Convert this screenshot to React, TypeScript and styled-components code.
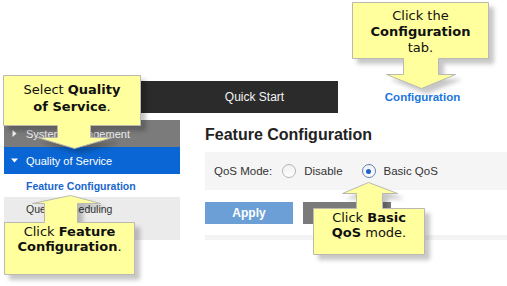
import styled, { createGlobalStyle } from "styled-components";

type Arrow = {
  dir: "up" | "down";
  sL: number;
  sR: number;
  hy: number;
  hL: number;
  hR: number;
  tipX: number;
  tipY: number;
};

type CalloutSpec = {
  left: number;
  top: number;
  w: number;
  h: number;
  padTop: number;
  lineHeight: number;
  arrow: Arrow;
  content: React.ReactNode;
};

const callouts: CalloutSpec[] = [
  {
    left: 3,
    top: 75,
    w: 138,
    h: 51,
    padTop: 6,
    lineHeight: 17,
    arrow: { dir: "down", sL: 54, sR: 87, hy: 62, hL: 34, hR: 109, tipX: 71, tipY: 73 },
    content: (
      <>
        Select <b>Quality</b>
        <br />
        <b>of Service</b>.
      </>
    ),
  },
  {
    left: 352,
    top: 2,
    w: 137,
    h: 57,
    padTop: 6,
    lineHeight: 16,
    arrow: { dir: "down", sL: 51, sR: 86, hy: 72, hL: 34, hR: 103, tipX: 69, tipY: 86 },
    content: (
      <>
        Click the
        <br />
        <b>Configuration</b>
        <br />
        tab.
      </>
    ),
  },
  {
    left: 4,
    top: 222,
    w: 131,
    h: 53,
    padTop: 2,
    lineHeight: 15,
    arrow: { dir: "up", sL: 40, sR: 73, hy: -19, hL: 28, hR: 96, tipX: 66, tipY: -27 },
    content: (
      <>
        Click <b>Feature</b>
        <br />
        <b>Configuration</b>.
      </>
    ),
  },
  {
    left: 313,
    top: 208,
    w: 112,
    h: 47,
    padTop: 2,
    lineHeight: 15,
    arrow: { dir: "up", sL: 43, sR: 69, hy: -15, hL: 29, hR: 84, tipX: 55, tipY: -26 },
    content: (
      <>
        Click <b>Basic</b>
        <br />
        <b>QoS</b> mode.
      </>
    ),
  },
];

function outline(w: number, h: number, a: Arrow) {
  const pts: [number, number][] =
    a.dir === "down"
      ? [
          [0, 0],
          [w, 0],
          [w, h],
          [a.sR, h],
          [a.sR, a.hy],
          [a.hR, a.hy],
          [a.tipX, a.tipY],
          [a.hL, a.hy],
          [a.sL, a.hy],
          [a.sL, h],
          [0, h],
        ]
      : [
          [0, 0],
          [a.sL, 0],
          [a.sL, a.hy],
          [a.hL, a.hy],
          [a.tipX, a.tipY],
          [a.hR, a.hy],
          [a.sR, a.hy],
          [a.sR, 0],
          [w, 0],
          [w, h],
          [0, h],
        ];
  return "M" + pts.map(([x, y]) => `${x + 0.5},${y + 0.5}`).join(" L") + " Z";
}

function Callout({ spec }: { spec: CalloutSpec }) {
  const { left, top, w, h, arrow } = spec;
  return (
    <CalloutWrap $left={left} $top={top} $w={w} $h={h}>
      <CalloutShape width={w + 1} height={h + 1}>
        <path d={outline(w - 1, h - 1, arrow)} fill="#ffff9d" stroke="#b9b9b0" strokeWidth={1} />
      </CalloutShape>
      <CalloutText $padTop={spec.padTop} $lh={spec.lineHeight}>
        {spec.content}
      </CalloutText>
    </CalloutWrap>
  );
}

function Radio({ checked }: { checked?: boolean }) {
  return (
    <RadioCircle $checked={checked}>{checked && <RadioDot />}</RadioCircle>
  );
}

function Tri({ down }: { down?: boolean }) {
  return (
    <svg width="7" height="7" viewBox="0 0 7 7">
      {down ? (
        <polygon points="0,1.5 7,1.5 3.5,5.5" fill="#fff" />
      ) : (
        <polygon points="1.5,0 5.5,3.5 1.5,7" fill="#f2f2f2" />
      )}
    </svg>
  );
}

export default function App() {
  return (
    <>
      <GlobalStyle />
      <Page>
        <Header>
          <DarkTabs>
            <Tab />
            <Tab>Quick Start</Tab>
          </DarkTabs>
          <ConfigTab>Configuration</ConfigTab>
        </Header>
        <Body>
          <Sidebar>
            <NavGroup $variant="closed">
              <Tri />
              System Management
            </NavGroup>
            <NavGroup $variant="open">
              <Tri down />
              Quality of Service
            </NavGroup>
            <NavItem $active>Feature Configuration</NavItem>
            <NavItem>Queue Scheduling</NavItem>
          </Sidebar>
          <Main>
            <Heading>Feature Configuration</Heading>
            <Panel>
              <FieldLabel>QoS Mode:</FieldLabel>
              <Option>
                <Radio />
                Disable
              </Option>
              <Option>
                <Radio checked />
                Basic QoS
              </Option>
            </Panel>
            <Buttons>
              <Button $variant="apply">Apply</Button>
              <Button $variant="cancel" />
            </Buttons>
            <Divider />
          </Main>
        </Body>
        {callouts.map((c, i) => (
          <Callout key={i} spec={c} />
        ))}
      </Page>
    </>
  );
}

const GlobalStyle = createGlobalStyle`
  html, body {
    margin: 0;
    padding: 0;
    background: #fff;
  }
  body {
    font-family: "Liberation Sans", Arial, sans-serif;
  }
`;

const Page = styled.div`
  position: relative;
  width: 507px;
  height: 286px;
  overflow: hidden;
  background: #fff;
`;

const Header = styled.div`
  display: flex;
  height: 32px;
  margin-top: 81px;
`;

const DarkTabs = styled.div`
  display: grid;
  grid-template-columns: 1fr 1fr;
  width: 334px;
  margin-left: 4px;
  background: #2b2b2b;
`;

const Tab = styled.div`
  display: flex;
  align-items: center;
  justify-content: center;
  color: #f4f4f4;
  font-size: 12px;
`;

const ConfigTab = styled.div`
  flex: 1;
  display: flex;
  align-items: center;
  justify-content: center;
  color: #1b76dd;
  font-size: 11.5px;
  font-weight: bold;
`;

const Body = styled.div`
  display: flex;
  margin-top: 7px;
  height: 120px;
`;

const Sidebar = styled.div`
  width: 176px;
  margin-left: 4px;
  background: #ebebeb;
`;

const NavGroup = styled.div<{ $variant: "open" | "closed" }>`
  display: flex;
  align-items: center;
  gap: 8px;
  height: 27px;
  padding-left: 7px;
  font-size: 11px;
  background: ${({ $variant }) => ($variant === "open" ? "#0a66d4" : "#7b7b7b")};
  color: ${({ $variant }) => ($variant === "open" ? "#ffffff" : "#eeeeee")};
`;

const NavItem = styled.div<{ $active?: boolean }>`
  display: flex;
  align-items: center;
  height: 23px;
  padding-left: 22px;
  font-size: 10.5px;
  font-weight: ${({ $active }) => ($active ? "bold" : "normal")};
  color: ${({ $active }) => ($active ? "#1866cc" : "#333")};
  background: ${({ $active }) => ($active ? "#fff" : "transparent")};
`;

const Main = styled.div`
  flex: 1;
  margin-left: 25px;
`;

const Heading = styled.div`
  height: 30px;
  line-height: 30px;
  margin-bottom: 2px;
  font-size: 16px;
  font-weight: bold;
  color: #222;
`;

const Panel = styled.div`
  display: flex;
  align-items: center;
  height: 38px;
  padding-left: 9px;
  background: #f5f5f5;
  font-size: 11.5px;
  color: #333;
`;

const FieldLabel = styled.span`
  margin-right: 10px;
`;

const Option = styled.label`
  display: flex;
  align-items: center;
  gap: 8px;
  margin-right: 19px;
`;

const RadioCircle = styled.span<{ $checked?: boolean }>`
  display: flex;
  align-items: center;
  justify-content: center;
  width: 12px;
  height: 12px;
  border-radius: 50%;
  border: 1px solid ${({ $checked }) => ($checked ? "#5d82b3" : "#b5b5b5")};
  background: linear-gradient(#f0f0f0, #ffffff);
`;

const RadioDot = styled.span`
  width: 5px;
  height: 5px;
  border-radius: 50%;
  background: #1a63c9;
`;

const Buttons = styled.div`
  display: flex;
  gap: 10px;
  margin-top: 12px;
`;

const Button = styled.div<{ $variant: "apply" | "cancel" }>`
  display: flex;
  align-items: center;
  justify-content: center;
  width: 88px;
  height: 22px;
  font-size: 12px;
  font-weight: bold;
  color: #fff;
  background: ${({ $variant }) => ($variant === "apply" ? "#6c9fd6" : "#7a7a7a")};
`;

const Divider = styled.div`
  height: 5px;
  margin-top: 11px;
  background: #f3f3f3;
`;

const CalloutWrap = styled.div<{ $left: number; $top: number; $w: number; $h: number }>`
  position: absolute;
  left: ${({ $left }) => $left}px;
  top: ${({ $top }) => $top}px;
  width: ${({ $w }) => $w}px;
  height: ${({ $h }) => $h}px;
`;

const CalloutShape = styled.svg`
  position: absolute;
  left: 0;
  top: 0;
  overflow: visible;
  filter: drop-shadow(5px 5px 2px rgba(0, 0, 0, 0.22));
`;

const CalloutText = styled.div<{ $padTop: number; $lh: number }>`
  position: relative;
  padding-top: ${({ $padTop }) => $padTop}px;
  text-align: center;
  font-family: "DejaVu Sans", Verdana, sans-serif;
  font-size: 13px;
  line-height: ${({ $lh }) => $lh}px;
  color: #111;
  b {
    font-weight: bold;
  }
`;
